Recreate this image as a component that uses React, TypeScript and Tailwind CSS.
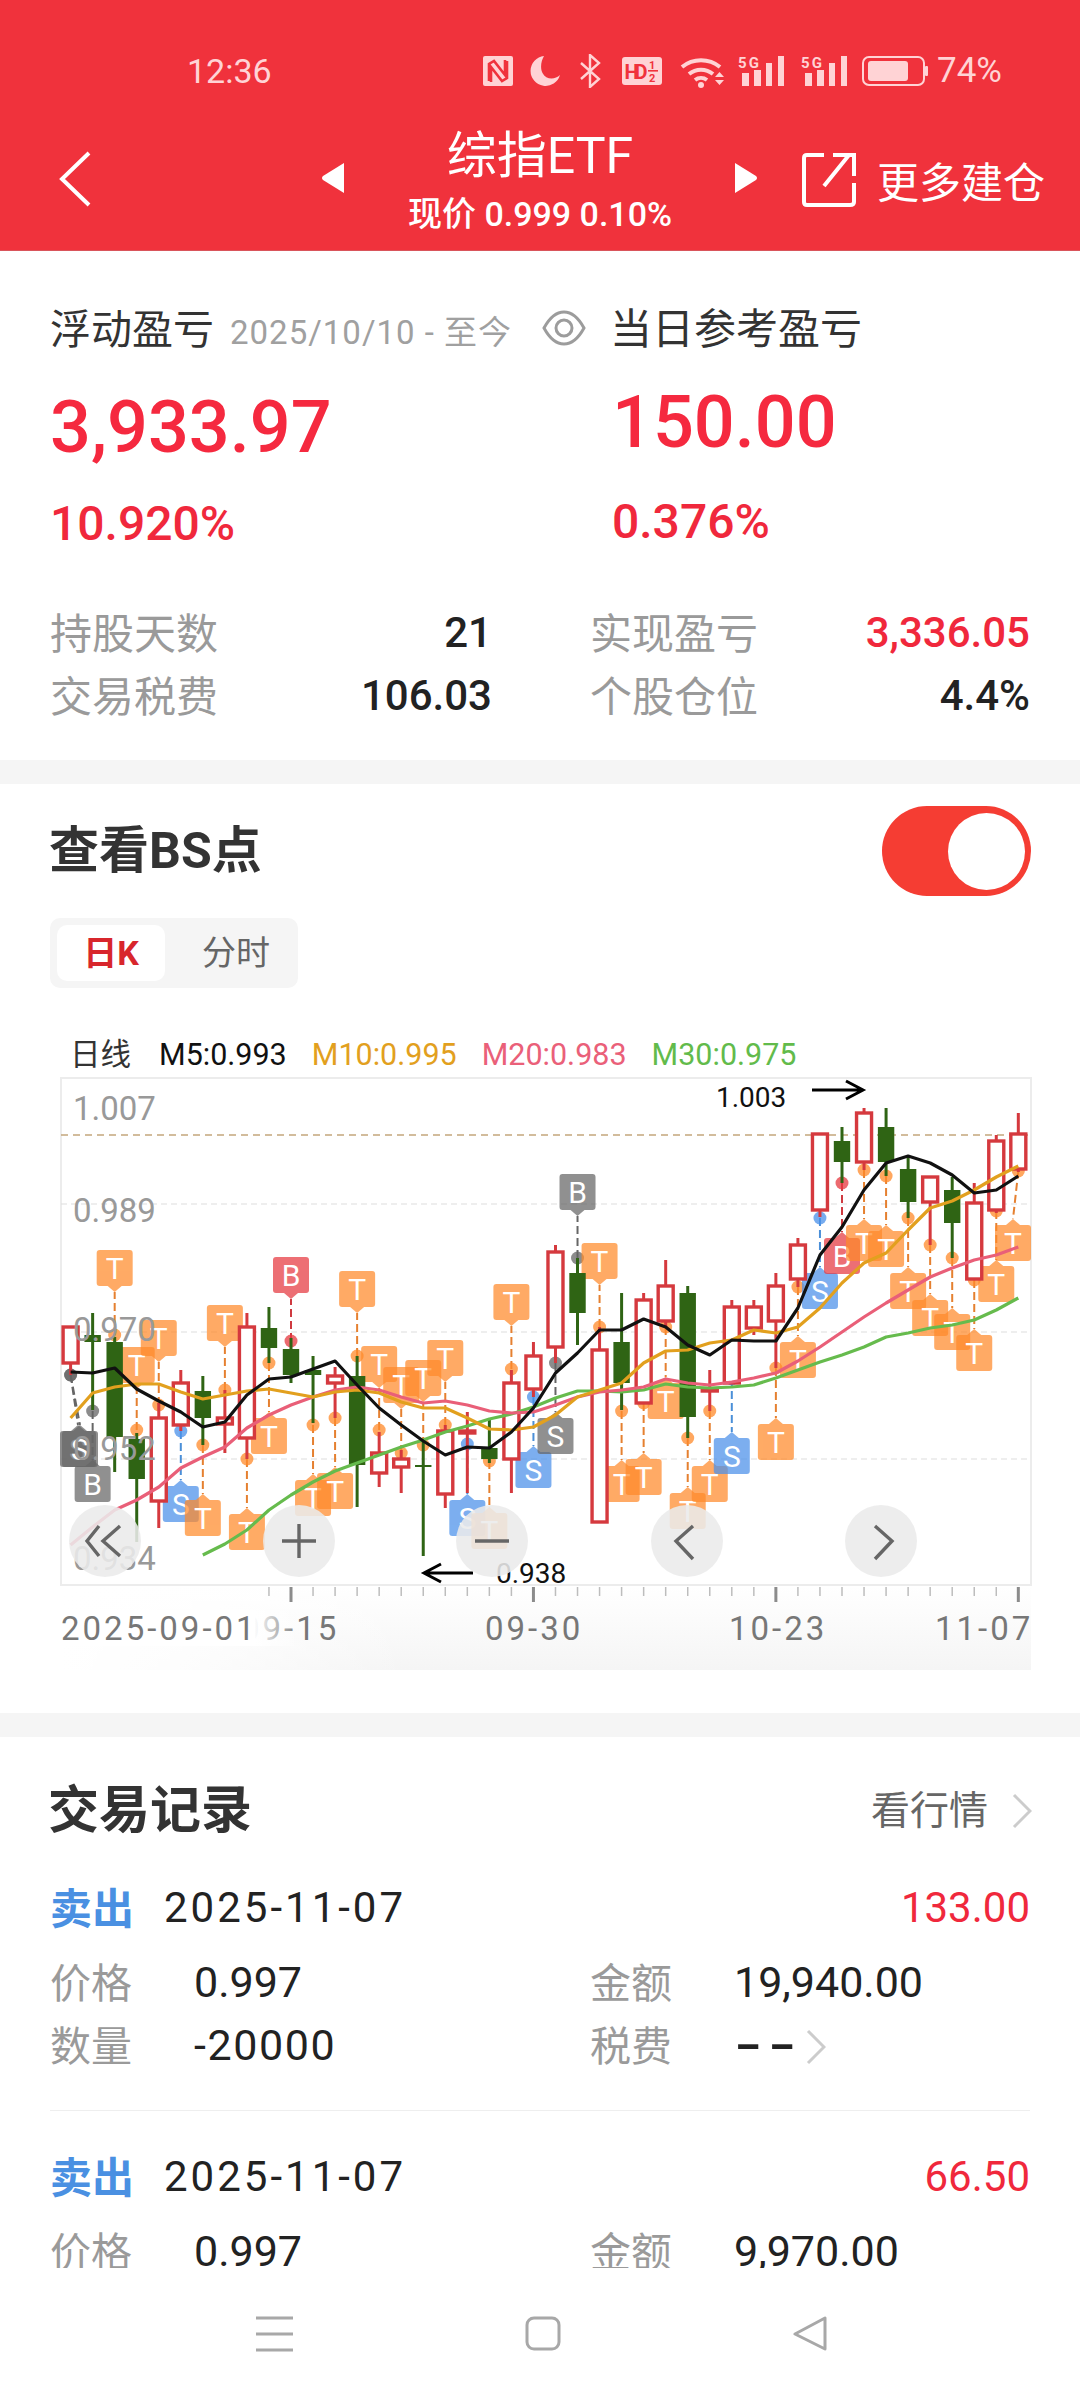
import React from 'react';

const FONT = "font-[Roboto,'Noto_Sans_CJK_SC',sans-serif]";

const cx = (i: number) => 70.6 + 22.04 * i;

// [index, up?, body top, body bottom, wick top, wick bottom]
const candles: [number, boolean, number, number, number, number][] = [
  [0, true, 1327, 1363, 1327, 1375],
  [1, false, 1335, 1342, 1313, 1410],
  [2, false, 1342, 1437, 1337, 1472],
  [3, false, 1439, 1479, 1433, 1542],
  [4, true, 1418, 1501, 1403, 1528],
  [5, true, 1383, 1425, 1370, 1431],
  [6, false, 1391, 1418, 1376, 1445],
  [7, true, 1418, 1424, 1390, 1453],
  [8, true, 1327, 1438, 1313, 1459],
  [9, false, 1328, 1348, 1307, 1363],
  [10, false, 1349, 1375, 1338, 1383],
  [11, false, 1370, 1375, 1356, 1423],
  [12, true, 1376, 1383, 1367, 1418],
  [13, false, 1376, 1465, 1356, 1507],
  [14, true, 1453, 1473, 1432, 1487],
  [15, true, 1459, 1467, 1450, 1493],
  [16, false, 1465, 1467, 1440, 1556],
  [17, true, 1431, 1494, 1425, 1508],
  [18, true, 1431, 1433, 1412, 1493],
  [19, false, 1448, 1459, 1418, 1463],
  [20, true, 1383, 1459, 1370, 1493],
  [21, true, 1356, 1389, 1342, 1397],
  [22, true, 1252, 1347, 1245, 1363],
  [23, false, 1273, 1313, 1258, 1345],
  [24, true, 1350, 1522, 1327, 1522],
  [25, false, 1342, 1383, 1293, 1410],
  [26, true, 1300, 1403, 1293, 1403],
  [27, true, 1286, 1321, 1260, 1327],
  [28, false, 1293, 1417, 1286, 1438],
  [29, true, 1389, 1391, 1370, 1411],
  [30, true, 1307, 1383, 1300, 1383],
  [31, true, 1307, 1328, 1300, 1335],
  [32, true, 1286, 1321, 1273, 1368],
  [33, true, 1245, 1279, 1238, 1287],
  [34, true, 1134, 1210, 1134, 1217],
  [35, false, 1141, 1162, 1127, 1183],
  [36, true, 1113, 1162, 1108, 1170],
  [37, false, 1127, 1162, 1108, 1176],
  [38, false, 1169, 1202, 1157, 1218],
  [39, true, 1177, 1202, 1177, 1245],
  [40, false, 1190, 1223, 1177, 1258],
  [41, true, 1203, 1279, 1183, 1280],
  [42, true, 1141, 1210, 1135, 1213],
  [43, true, 1134, 1169, 1113, 1172],
];

type Mark = { i: number; t: 'T' | 'S' | 'B'; top: number; dot: number; x?: number; gray?: boolean };

const marks: Mark[] = [
  { i: 0, t: 'S', top: 1431, dot: 1375, x: 78, gray: true },
  { i: 0, t: 'S', top: 1431, dot: 1375, x: 80, gray: true },
  { i: 1, t: 'B', top: 1466, dot: 1411, gray: true },
  { i: 2, t: 'T', top: 1250, dot: 1335 },
  { i: 3, t: 'T', top: 1347, dot: 1430 },
  { i: 4, t: 'T', top: 1320, dot: 1405 },
  { i: 5, t: 'S', top: 1486, dot: 1431 },
  { i: 6, t: 'T', top: 1500, dot: 1445 },
  { i: 7, t: 'T', top: 1305, dot: 1390 },
  { i: 8, t: 'T', top: 1514, dot: 1459 },
  { i: 9, t: 'T', top: 1418, dot: 1363 },
  { i: 10, t: 'B', top: 1257, dot: 1341 },
  { i: 11, t: 'T', top: 1480, dot: 1425 },
  { i: 12, t: 'T', top: 1473, dot: 1418 },
  { i: 13, t: 'T', top: 1271, dot: 1356 },
  { i: 14, t: 'T', top: 1346, dot: 1430 },
  { i: 15, t: 'T', top: 1367, dot: 1453 },
  { i: 16, t: 'T', top: 1360, dot: 1445 },
  { i: 17, t: 'T', top: 1340, dot: 1425 },
  { i: 18, t: 'S', top: 1500, dot: 1444 },
  { i: 19, t: 'T', top: 1513, dot: 1461 },
  { i: 20, t: 'T', top: 1284, dot: 1369 },
  { i: 21, t: 'S', top: 1452, dot: 1397 },
  { i: 22, t: 'S', top: 1418, dot: 1363, gray: true },
  { i: 23, t: 'B', top: 1174, dot: 1258, gray: true },
  { i: 24, t: 'T', top: 1243, dot: 1327 },
  { i: 25, t: 'T', top: 1466, dot: 1411 },
  { i: 26, t: 'T', top: 1459, dot: 1403 },
  { i: 27, t: 'T', top: 1383, dot: 1327 },
  { i: 28, t: 'T', top: 1493, dot: 1438 },
  { i: 29, t: 'T', top: 1466, dot: 1411 },
  { i: 30, t: 'S', top: 1438, dot: 1379 },
  { i: 32, t: 'T', top: 1424, dot: 1368 },
  { i: 33, t: 'T', top: 1342, dot: 1287 },
  { i: 34, t: 'S', top: 1273, dot: 1218 },
  { i: 35, t: 'B', top: 1238, dot: 1183 },
  { i: 36, t: 'T', top: 1225, dot: 1170 },
  { i: 37, t: 'T', top: 1231, dot: 1176 },
  { i: 38, t: 'T', top: 1273, dot: 1218 },
  { i: 39, t: 'T', top: 1300, dot: 1245 },
  { i: 40, t: 'T', top: 1314, dot: 1258 },
  { i: 41, t: 'T', top: 1335, dot: 1280 },
  { i: 42, t: 'T', top: 1266, dot: 1211 },
  { i: 43, t: 'T', top: 1225, dot: 1171, x: 1013 },
];

const m5 = [1372, 1373, 1368, 1389, 1401, 1412, 1427, 1422, 1395, 1379, 1377, 1369, 1361, 1385, 1408, 1425, 1441, 1455, 1447, 1448, 1432, 1408, 1373, 1353, 1330, 1330, 1319, 1327, 1345, 1355, 1340, 1341, 1341, 1308, 1255, 1227, 1190, 1163, 1156, 1163, 1175, 1193, 1190, 1176];
const m10 = [1418, 1393, 1387, 1384, 1384, 1392, 1399, 1395, 1391, 1389, 1393, 1397, 1392, 1390, 1393, 1402, 1408, 1408, 1418, 1429, 1430, 1427, 1415, 1397, 1390, 1383, 1363, 1351, 1350, 1343, 1340, 1330, 1333, 1327, 1308, 1283, 1263, 1253, 1230, 1208, 1201, 1190, 1177, 1166];
const m20 = [1545, 1527, 1510, 1500, 1487, 1468, 1457, 1447, 1428, 1415, 1405, 1397, 1390, 1387, 1390, 1397, 1403, 1401, 1405, 1411, 1413, 1412, 1405, 1397, 1392, 1390, 1387, 1379, 1383, 1385, 1382, 1378, 1373, 1361, 1347, 1332, 1317, 1303, 1290, 1277, 1268, 1260, 1255, 1247];
const m30 = [1555, 1544, 1530, 1510, 1495, 1482, 1471, 1463, 1455, 1447, 1440, 1432, 1426, 1419, 1414, 1407, 1398, 1391, 1391, 1392, 1390, 1384, 1387, 1388, 1387, 1385, 1378, 1370, 1362, 1355, 1347, 1337, 1333, 1328, 1325, 1320, 1310, 1298];

const pts = (ys: number[], start = 0) => ys.map((y, k) => `${cx(k + start).toFixed(1)},${y}`).join(' ');

const markColor = (m: Mark) => {
  if (m.gray) return { fill: '#666666', line: '#666666' };
  if (m.t === 'T') return { fill: '#ff8a2a', line: '#e58030' };
  if (m.t === 'S') return { fill: '#4a90ea', line: '#4a8fd8' };
  return { fill: '#e6383f', line: '#cf3a40' };
};

const MarkFlag = ({ m }: { m: Mark }) => {
  const x0 = cx(m.i);
  const x = m.x ?? x0;
  const below = m.top > m.dot;
  const c = markColor(m);
  const tipY = below ? m.top - 6 : m.top + 42;
  const tri = below
    ? `${x - 7},${m.top} ${x},${m.top - 6} ${x + 7},${m.top}`
    : `${x - 7},${m.top + 36} ${x},${m.top + 42} ${x + 7},${m.top + 36}`;
  return (
    <g>
      <line x1={x0} y1={m.dot} x2={x} y2={tipY} stroke={c.line} strokeWidth="2" strokeDasharray="8 4" />
      <circle cx={x0} cy={m.dot} r="6.5" fill={c.fill} opacity="0.75" />
      <g opacity="0.72">
        <rect x={x - 18} y={m.top} width="36" height="36" rx="3" fill={c.fill} />
        <polygon points={tri} fill={c.fill} />
      </g>
      <text x={x} y={m.top + 29} textAnchor="middle" fontSize="30" fill="#fff" fontFamily="Roboto">
        {m.t}
      </text>
    </g>
  );
};

const Candle = ({ c }: { c: (typeof candles)[number] }) => {
  const [i, up, top, bottom, wt, wb] = c;
  const x = cx(i);
  const col = up ? '#d5393e' : '#2f6414';
  return (
    <g>
      <line x1={x} y1={wt} x2={x} y2={wb} stroke={col} strokeWidth="3" />
      {up ? (
        <rect x={x - 7.5} y={top} width="15" height={bottom - top} fill="#fff" stroke={col} strokeWidth="3.4" />
      ) : (
        <rect x={x - 8.2} y={top} width="16.4" height={bottom - top} fill={col} />
      )}
    </g>
  );
};

const ChartButton = ({ x, children }: { x: number; children: React.ReactNode }) => (
  <g>
    <circle cx={x} cy="1541" r="36" fill="#ebebeb" opacity="0.88" />
    <g stroke="#666" strokeWidth="3.4" fill="none">
      {children}
    </g>
  </g>
);

const KChart = () => (
  <svg width="1080" height="605" viewBox="0 1075 1080 605" className="block">
    <defs>
      <linearGradient id="axisFade" x1="0" y1="0" x2="0" y2="1">
        <stop offset="0" stopColor="#ffffff" />
        <stop offset="1" stopColor="#f5f5f5" />
      </linearGradient>
      <linearGradient id="axisLeft" x1="0" y1="0" x2="1" y2="0">
        <stop offset="0" stopColor="#ffffff" />
        <stop offset="0.12" stopColor="#ffffff" stopOpacity="0.8" />
        <stop offset="0.36" stopColor="#ffffff" stopOpacity="0" />
      </linearGradient>
      <linearGradient id="dateFade" x1="0" y1="0" x2="1" y2="0">
        <stop offset="0" stopColor="#ffffff" />
        <stop offset="1" stopColor="#ffffff" stopOpacity="0" />
      </linearGradient>
    </defs>
    <rect x="61" y="1586" width="970" height="84" fill="url(#axisFade)" />
    <rect x="61" y="1586" width="970" height="84" fill="url(#axisLeft)" />
    <rect x="61" y="1078" width="970" height="507" fill="#fff" stroke="#ececec" strokeWidth="2" />

    <line x1="61" y1="1135" x2="1031" y2="1135" stroke="#c4a67c" strokeWidth="1.6" strokeDasharray="7 5" />
    {[1204, 1332, 1459].map(y => (
      <line key={y} x1="61" y1={y} x2="1031" y2={y} stroke="#dedede" strokeWidth="1.2" strokeDasharray="6 4" />
    ))}

    {marks.map((m, k) => (
      <MarkFlag key={k} m={m} />
    ))}
    {candles.map(c => (
      <Candle key={c[0]} c={c} />
    ))}

    <g fill="none" strokeWidth="3.2" strokeLinejoin="round">
      <polyline points={pts(m30, 6)} stroke="#66bb4d" />
      <polyline points={pts(m20)} stroke="#e95f78" />
      <polyline points={pts(m10)} stroke="#e2a01e" />
      <polyline points={pts(m5)} stroke="#111111" />
    </g>

    <g fontFamily="Roboto" fontSize="33" fill="#999999">
      <text x="73" y="1120">1.007</text>
      <text x="73" y="1222">0.989</text>
      <text x="73" y="1341">0.970</text>
      <text x="73" y="1460">0.952</text>
      <text x="73" y="1570">0.934</text>
    </g>

    <g fontFamily="Roboto" fontSize="28" fill="#111111">
      <text x="716" y="1107">1.003</text>
      <text x="496" y="1583">0.938</text>
    </g>
    <g stroke="#000" strokeWidth="3" fill="none">
      <path d="M812 1090H862M846 1081L863 1090L846 1099" />
      <path d="M473 1573H424M441 1564L424 1573L441 1582" />
    </g>

    <ChartButton x={105}>
      <path d="M99 1526L87 1541L99 1556M120 1526L103 1541L120 1556" />
    </ChartButton>
    <ChartButton x={299}>
      <path d="M282 1541H316M299 1524V1558" />
    </ChartButton>
    <ChartButton x={492}>
      <path d="M475 1541H509" />
    </ChartButton>
    <ChartButton x={687}>
      <path d="M693 1526L676 1541L693 1559" />
    </ChartButton>
    <ChartButton x={881}>
      <path d="M875 1526L892 1541L875 1559" />
    </ChartButton>

    {candles.filter(c => c[0] >= 9).map(c => {
      const big = [10, 21, 32, 43].includes(c[0]);
      return (
        <line
          key={c[0]}
          x1={cx(c[0])}
          y1="1587"
          x2={cx(c[0])}
          y2={big ? 1602 : 1596}
          stroke={big ? '#8c8c8c' : '#bdbdbd'}
          strokeWidth={big ? 3 : 1.5}
        />
      );
    })}

    <g fontFamily="Roboto" fontSize="33" fill="#777777" letterSpacing="3">
      <text x="241" y="1640">09-15</text>
      <text x="485" y="1640">09-30</text>
      <text x="729" y="1640">10-23</text>
      <text x="935" y="1640">11-07</text>
      <rect x="254" y="1610" width="46" height="36" fill="url(#dateFade)" />
      <rect x="61" y="1610" width="194" height="36" fill="#fff" />
      <text x="61" y="1640">2025-09-01</text>
    </g>
  </svg>
);

const StatusIcons = () => (
  <div className="flex items-center text-[#ffd3d5]">
    <svg width="30" height="30" viewBox="0 0 30 30" className="ml-0">
      <rect width="30" height="30" rx="2" fill="currentColor" />
      <path d="M6 25V8L11 5L22 19V4M24 5V22L19 25L8 11V26" fill="none" stroke="#f0323c" strokeWidth="2.6" />
    </svg>
    <svg width="30" height="30" viewBox="0 0 30 30" className="ml-[17px]" fill="currentColor">
      <path d="M14 0A15 15 0 1 0 30 19C25 24 16 24 12.5 17C10 12 11 5 14 0Z" />
    </svg>
    <svg width="21" height="34" viewBox="0 0 21 34" className="ml-[20px]" fill="none" stroke="currentColor" strokeWidth="2.4">
      <path d="M1 9L19 25L10 33V1L19 9L1 25" />
    </svg>
    <svg width="40" height="28" viewBox="0 0 40 28" className="ml-[21px]">
      <rect width="40" height="28" rx="3" fill="currentColor" />
      <text x="2.5" y="22" fontFamily="Roboto" fontSize="20" fontWeight="700" fill="#f0323c" textLength="23">HD</text>
      <text x="27" y="12" fontFamily="Roboto" fontSize="11" fontWeight="700" fill="#f0323c">1</text>
      <rect x="26" y="13" width="10" height="1.6" fill="#f0323c" />
      <text x="27" y="25" fontFamily="Roboto" fontSize="11" fontWeight="700" fill="#f0323c">2</text>
    </svg>
    <svg width="45" height="34" viewBox="0 0 45 34" className="ml-[18px]" fill="none" stroke="currentColor" strokeWidth="4">
      <path d="M2 13A30 30 0 0 1 40 13" />
      <path d="M9 20A19 19 0 0 1 33 20" />
      <path d="M15 26A10 10 0 0 1 27 26" />
      <circle cx="21" cy="31" r="3" fill="currentColor" stroke="none" />
      <path d="M35 23L39.500 18L44 23ZM35 26L39.500 31L44 26Z" fill="currentColor" stroke="none" />
    </svg>
    {[0, 1].map(k => (
      <svg key={k} width="47" height="31" viewBox="0 0 47 31" className={k === 0 ? 'ml-[13px]' : 'ml-[16px]'} fill="currentColor">
        <text x="0" y="13" fontFamily="Roboto" fontSize="15" fontWeight="700" textLength="21">5G</text>
        <rect x="4" y="18" width="7" height="13" />
        <rect x="16" y="15" width="7" height="16" />
        <rect x="28" y="8" width="6" height="23" />
        <rect x="40" y="1" width="6" height="30" />
      </svg>
    ))}
    <svg width="66" height="30" viewBox="0 0 66 30" className="ml-[14px]">
      <rect x="1" y="1" width="61" height="28" rx="6" fill="none" stroke="currentColor" strokeWidth="2" />
      <rect x="6" y="5" width="40" height="20" rx="3" fill="currentColor" />
      <rect x="63" y="10" width="3" height="10" rx="1" fill="currentColor" />
    </svg>
    <span className="ml-[9px] text-[35px] leading-none">74%</span>
  </div>
);

const Chevron = ({ className }: { className?: string }) => (
  <svg width="20" height="36" viewBox="0 0 20 36" className={className} fill="none" stroke="#cccccc" strokeWidth="3">
    <path d="M2 2L18 18L2 34" />
  </svg>
);

const Header = () => (
  <div className="h-[251px] shrink-0 bg-[#f0323c] border-b border-b-[#d9555b]">
    <div className="flex h-[132px] items-start pt-[53px] pr-[78px]">
      <span className="ml-[187px] text-[34px] leading-[36px] text-[#ffd3d5]">12:36</span>
      <div className="ml-auto">
        <StatusIcons />
      </div>
    </div>
    <div className="relative h-[118px] text-white">
      <svg width="34" height="56" viewBox="0 0 34 56" className="absolute left-[58px] top-[19px]" fill="none" stroke="#fff" strokeWidth="4">
        <path d="M31 2L4 28L31 54" />
      </svg>
      <svg width="23" height="30" viewBox="0 0 23 30" className="absolute left-[321px] top-[31px]" fill="#fff">
        <path d="M23 0V30L2 17Q0 15 2 13Z" />
      </svg>
      <div className="mx-auto flex w-[300px] flex-col items-center">
        <span className="mt-[-4px] text-[50px] leading-[56px]">综指ETF</span>
        <span className="mt-[13px] text-[34px] font-medium leading-[34px]">现价 0.999 0.10%</span>
      </div>
      <svg width="23" height="30" viewBox="0 0 23 30" className="absolute left-[735px] top-[31px]" fill="#fff">
        <path d="M0 0V30L21 17Q23 15 21 13Z" />
      </svg>
      <svg width="54" height="56" viewBox="0 0 54 56" className="absolute left-[802px] top-[20px]" fill="none" stroke="#fff" strokeWidth="4">
        <path d="M22 3H5Q2 3 2 6V50Q2 53 5 53H48Q52 53 52 50V31" />
        <path d="M22 34L47 3M31 3H52V24" />
      </svg>
      <span className="absolute left-[877px] top-[28px] text-[42px] leading-[48px]">更多建仓</span>
    </div>
  </div>
);

const Stat = ({ label, value, red }: { label: string; value: string; red?: boolean }) => (
  <div className="flex items-center justify-between">
    <span className="text-[42px] leading-[48px] text-[#9a9a9a]">{label}</span>
    <span className={`mt-[-5px] text-[42px] font-medium leading-[48px] ${red ? 'text-[#f0283c]' : 'text-[#222222]'}`}>{value}</span>
  </div>
);

const Summary = () => (
  <section className="h-[509px] shrink-0 bg-white px-[50px] pt-[53px]">
    <div className="flex items-center">
      <span className="text-[41px] leading-[52px] text-[#333333]">浮动盈亏</span>
      <span className="ml-[16px] mt-[6px] w-[312px] text-[33px] leading-[40px] tracking-[1px] text-[#a0a0a0]">2025/10/10 - 至今</span>
      <svg width="44" height="36" viewBox="0 0 44 36" className="mt-[-4px]" fill="none" stroke="#9c9c9c" strokeWidth="3">
        <path d="M2 18C8 7 15 2 22 2S36 7 42 18C36 29 29 34 22 34S8 29 2 18Z" />
        <circle cx="22" cy="18" r="8" />
      </svg>
      <span className="ml-[24px] text-[42px] leading-[52px] text-[#333333]">当日参考盈亏</span>
    </div>
    <div className="mt-[31px] flex h-[78px] items-center">
      <span className="w-[562px] pt-[4px] text-[72px] font-medium leading-[78px] text-[#f5293f]">3,933.97</span>
      <span className="mt-[-6px] text-[72px] font-medium leading-[78px] text-[#f5293f]">150.00</span>
    </div>
    <div className="mt-[31px] flex h-[56px] items-center text-[48px] font-medium leading-[56px] text-[#f0283c]">
      <span className="w-[562px]">10.920%</span>
      <span className="mt-[-4px]">0.376%</span>
    </div>
    <div className="mt-[59px] grid grid-cols-[442px_440px] gap-x-[98px] gap-y-[15px]">
      <Stat label="持股天数" value="21" />
      <Stat label="实现盈亏" value="3,336.05" red />
      <Stat label="交易税费" value="106.03" />
      <Stat label="个股仓位" value="4.4%" />
    </div>
  </section>
);

const BsChart = () => (
  <section className="h-[929px] shrink-0 bg-white">
    <div className="flex items-center justify-between px-[49px] pt-[22px]">
      <span className="text-[50px] font-bold leading-[60px] text-[#333333]">查看BS点</span>
      <div className="flex h-[90px] w-[149px] items-center justify-end rounded-full bg-[#f53d33] pr-[6px]">
        <div className="h-[77px] w-[77px] rounded-full bg-white" />
      </div>
    </div>
    <div className="ml-[50px] mt-[22px] flex h-[70px] w-[248px] items-center rounded-[10px] bg-[#f5f5f5] px-[7px]">
      <div className="flex h-[56px] w-[108px] items-center justify-center rounded-[10px] bg-white text-[34px] font-bold text-[#d8262c]">
        日K
      </div>
      <span className="ml-[37px] text-[34px] text-[#666666]">分时</span>
    </div>
    <div className="ml-[70px] mt-[48px] flex h-[38px] items-center text-[30.5px] leading-[38px]">
      <span className="text-[#333333]">日线</span>
      <span className="ml-[28px] text-[#111111]">M5:0.993</span>
      <span className="ml-[25px] text-[#e2a01e]">M10:0.995</span>
      <span className="ml-[25px] text-[#ea6079]">M20:0.983</span>
      <span className="ml-[25px] text-[#62bb4b]">M30:0.975</span>
    </div>
    <div className="mt-px">
      <KChart />
    </div>
  </section>
);

const Field = ({ label, value, children }: { label: string; value: string; children?: React.ReactNode }) => (
  <div className="flex items-center">
    <span className="w-[144px] text-[41px] leading-[46px] text-[#9a9a9a]">{label}</span>
    {value === '--' ? (
      <span className="mt-[-5px] origin-left scale-x-[1.7] text-[43px] font-bold leading-[46px] tracking-[3px] text-[#222222]">{value}</span>
    ) : (
      <span className={`mt-[-5px] text-[43px] leading-[46px] text-[#222222] ${value.startsWith('-') ? 'tracking-[1.6px]' : ''}`}>{value}</span>
    )}
    {children}
  </div>
);

const Trade = ({ amount, total, qty, last }: { amount: string; total: string; qty?: string; last?: boolean }) => (
  <div className={last ? 'pt-[44px]' : 'border-b border-b-[#eeeeee] pb-[40px] pt-0'}>
    <div className="flex items-center justify-between">
      <div className="flex items-center">
        <span className="text-[42px] font-bold leading-[48px] text-[#4a90e2]">卖出</span>
        <span className="ml-[30px] mt-[-4px] text-[42px] leading-[48px] tracking-[3px] text-[#222222]">2025-11-07</span>
      </div>
      <span className="mt-[-4px] text-[42px] leading-[48px] text-[#f0283c]">{amount}</span>
    </div>
    <div className="mt-[27px] grid grid-cols-[540px_1fr] gap-y-[17px]">
      <Field label="价格" value="0.997" />
      <Field label="金额" value={total} />
      {qty && <Field label="数量" value={qty} />}
      {qty && (
        <Field label="税费" value="--">
          <Chevron className="ml-[32px]" />
        </Field>
      )}
    </div>
  </div>
);

const Records = () => (
  <section className="flex-1 overflow-hidden bg-white px-[50px] pt-[44px]">
    <div className="flex items-center justify-between">
      <span className="ml-[-2px] text-[51px] font-bold leading-[60px] text-[#333333]">交易记录</span>
      <div className="mr-[-2px] flex items-center">
        <span className="text-[39px] leading-[48px] text-[#666666]">看行情</span>
        <Chevron className="ml-[24px]" />
      </div>
    </div>
    <div className="mt-[45px]">
      <Trade amount="133.00" total="19,940.00" qty="-20000" />
      <Trade amount="66.50" total="9,970.00" last />
    </div>
  </section>
);

const BottomNav = () => (
  <div className="flex h-[132px] shrink-0 items-start bg-white pt-[48px]">
    <svg width="38" height="36" viewBox="0 0 38 36" className="ml-[256px]" fill="none" stroke="#a8a8a8" strokeWidth="3">
      <path d="M0 2H37M0 18H37M0 34H37" />
    </svg>
    <svg width="36" height="35" viewBox="0 0 36 35" className="ml-[231px]" fill="none" stroke="#a8a8a8" strokeWidth="3">
      <rect x="2" y="2" width="32" height="31" rx="7" />
    </svg>
    <svg width="34" height="35" viewBox="0 0 34 35" className="ml-[232px]" fill="none" stroke="#a8a8a8" strokeWidth="3" strokeLinejoin="round">
      <path d="M32 2V33L2 18Z" />
    </svg>
  </div>
);

const Gap = ({ h }: { h: string }) => <div className={`${h} shrink-0 bg-[#f5f5f5]`} />;

export default function App() {
  return (
    <div className={`flex h-[2400px] w-[1080px] flex-col overflow-hidden bg-white ${FONT}`}>
      <Header />
      <Summary />
      <Gap h="h-[24px]" />
      <BsChart />
      <Gap h="h-[24px]" />
      <Records />
      <BottomNav />
    </div>
  );
}
